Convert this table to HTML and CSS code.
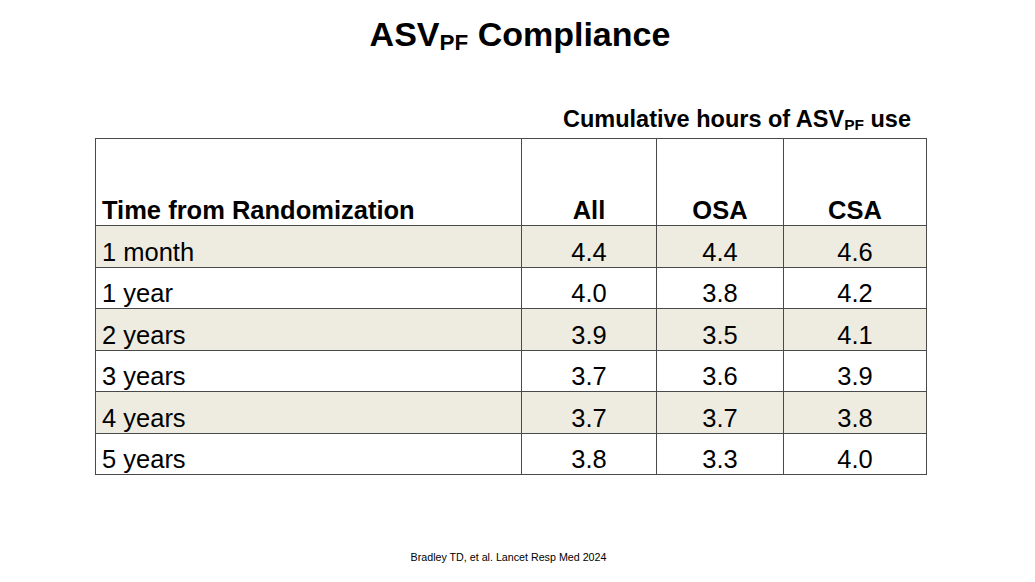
FILE: index.html
```html
<!DOCTYPE html>
<html>
<head>
<meta charset="utf-8">
<link rel="stylesheet" href="styles.css">
</head>
<body>
<div class="slide">
  <h1 class="title">ASV<span class="sub">PF</span> Compliance</h1>
  <div class="table-wrap">
    <div class="caption">Cumulative hours of ASV<span class="sub">PF</span> use</div>
    <table class="data">
      <colgroup>
        <col class="c1"><col class="c2"><col class="c3"><col class="c4">
      </colgroup>
      <thead>
        <tr class="head">
          <th class="left">Time from Randomization</th>
          <th>All</th>
          <th>OSA</th>
          <th>CSA</th>
        </tr>
      </thead>
      <tbody>
        <tr class="shade"><td class="left">1 month</td><td>4.4</td><td>4.4</td><td>4.6</td></tr>
        <tr><td class="left">1 year</td><td>4.0</td><td>3.8</td><td>4.2</td></tr>
        <tr class="shade"><td class="left">2 years</td><td>3.9</td><td>3.5</td><td>4.1</td></tr>
        <tr><td class="left">3 years</td><td>3.7</td><td>3.6</td><td>3.9</td></tr>
        <tr class="shade"><td class="left">4 years</td><td>3.7</td><td>3.7</td><td>3.8</td></tr>
        <tr><td class="left">5 years</td><td>3.8</td><td>3.3</td><td>4.0</td></tr>
      </tbody>
    </table>
  </div>
  <div class="source">Bradley TD, et al. Lancet Resp Med 2024</div>
</div>
</body>
</html>
```

FILE: styles.css
```css
html, body {
  margin: 0;
  padding: 0;
  background: #ffffff;
}

.slide {
  width: 1035px;
  height: 582px;
  font-family: "Liberation Sans", Arial, sans-serif;
  color: #000000;
  display: flex;
  flex-direction: column;
  align-items: center;
}

.title {
  margin: 15px 0 0 0;
  font-size: 34px;
  font-weight: bold;
  line-height: 39px;
  text-align: center;
  padding-left: 5px;
}

.sub {
  font-size: 0.66em;
  vertical-align: -0.17em;
  line-height: 0;
}

.table-wrap {
  margin-top: 51px;
  margin-left: -13px;
  width: 832px;
  display: flex;
  flex-direction: column;
}

.caption {
  align-self: flex-end;
  margin-right: 16px;
  font-size: 23.5px;
  font-weight: bold;
  line-height: 29px;
  margin-bottom: 4px;
}

.data {
  border-collapse: collapse;
  width: 832px;
  table-layout: fixed;
  font-size: 25.5px;
}

.c1 { width: 426px; }
.c2 { width: 135px; }
.c3 { width: 127px; }
.c4 { width: 143px; }

.data th,
.data td {
  border: 1px solid #4a4a4a;
  vertical-align: bottom;
  text-align: center;
  padding: 0 5px 0 5px;
  line-height: 29px;
}

.data th {
  font-weight: bold;
}

.data .left {
  text-align: left;
  padding-left: 6px;
}

.head th {
  height: 86px;
}

.data tbody td {
  height: 40.5px;
}

.shade td {
  background: #eeece1;
}

.source {
  margin-top: 76px;
  margin-left: -18px;
  font-size: 10.7px;
  line-height: 13px;
}
```
